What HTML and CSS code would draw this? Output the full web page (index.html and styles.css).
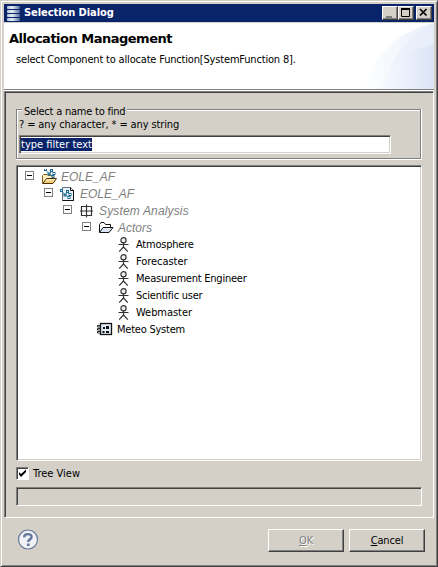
FILE: index.html
```html
<!DOCTYPE html>
<html lang="en">
<head>
<meta charset="utf-8">
<title>Selection Dialog</title>
<link rel="stylesheet" href="styles.css">
</head>
<body>
<svg class="defs" width="0" height="0">
  <defs>
    <symbol id="net" viewBox="0 0 12 10"><g fill="none" stroke="#17658f"><path d="M2 2l3 4 4-4M5 6l4 2" stroke="#5b9dbc"/><rect x=".5" y=".5" width="2" height="2"/><rect x="4" y="5" width="2" height="2"/><rect x="6.5" y="1.5" width="2" height="2"/><rect x="9" y="4.5" width="2" height="2"/><rect x="8" y="7.5" width="2" height="2"/></g></symbol>
    <symbol id="actor" viewBox="0 0 12 16"><g fill="none" stroke="#333" stroke-width="1.15"><circle cx="5.5" cy="3.2" r="2.6" fill="#eee"/><path d="M5.500 6v4.500M.5 7.500h10M5.500 10L1.200 14.700M5.500 10L9.800 14.700"/></g></symbol>
    <linearGradient id="gold" x2="0" y2="1"><stop stop-color="#fff3c8"/><stop offset="1" stop-color="#efb94e"/></linearGradient>
    <linearGradient id="metal"><stop stop-color="#b5c3da"/><stop offset=".4" stop-color="#e8edf5"/><stop offset="1" stop-color="#536d9e"/></linearGradient>
    <linearGradient id="fade1"><stop stop-color="#fff"/><stop offset="1" stop-color="#e8eefa"/></linearGradient>
    <linearGradient id="fade2"><stop stop-color="#f6f9ff"/><stop offset="1" stop-color="#dce4f6"/></linearGradient>
  </defs>
</svg>
<div class="window">
  <div class="titlebar">
    <svg class="appicon" width="15" height="15" viewBox="0 0 15 15"><g fill="url(#metal)"><rect x="1" y="0" width="13" height="3" rx="1"/><rect x="1" y="4" width="13" height="3" rx="1"/><rect x="1" y="8" width="13" height="3" rx="1"/><rect x="1" y="12" width="13" height="3" rx="1"/></g></svg>
    <span class="caption">Selection Dialog</span>
    <span class="winbtn"><svg width="11" height="10"><path d="M2 9h6" stroke="#808080" stroke-width="2"/></svg></span>
    <span class="winbtn"><svg width="11" height="10"><path d="M1 0h9v2H1z"/><path d="M1.500 .5h8v8h-8z" fill="none" stroke="#000"/></svg></span>
    <span class="winbtn close"><svg width="11" height="10"><path d="M2 1l6.500 6.500M8.500 1L2 7.500" stroke="#000" stroke-width="1.700"/></svg></span>
  </div>
  <div class="header">
    <svg class="swoosh" width="76" height="66" viewBox="0 0 76 66"><path d="M4 66C19 28 42 8 76 0v66z" fill="url(#fade1)"/><path d="M24 66C34 37 48 12 76 0v66z" fill="#e5ecf9" opacity=".45"/><path d="M24 66C32 39 50 25 76 22v44z" fill="url(#fade2)"/></svg>
    <div class="heading">Allocation Management</div>
    <div class="message">select Component to allocate Function[SystemFunction 8].</div>
  </div>
  <div class="panel">
    <fieldset class="group">
      <legend>Select a name to find</legend>
      <div class="hint">? = any character, * = any string</div>
      <div class="input"><span class="selected">type filter text</span></div>
    </fieldset>
    <div class="tree">
      <div class="row l0"><i class="twisty"></i><svg width="16" height="16"><path d="M1.500 14V6.500l1-1H6l1 1h5V9" fill="#fff0c0" stroke="#8b5c1c"/><path d="M1.500 14.500l4-5h10l-3.500 5z" fill="url(#gold)" stroke="#4a310c"/><use href="#net" x="3" y="-1" width="12" height="10"/></svg><em>EOLE_AF</em></div>
      <div class="row l1"><i class="twisty"></i><svg width="16" height="16"><path d="M2.500 1.500h8l3 3v10h-11z" fill="#edf5fc" stroke="#687580"/><path d="M10.500 1.500v3h3M13.500 4v10.500h-11" fill="none" stroke="#111"/><use href="#net" x="0" y="3" width="12" height="10"/></svg><em>EOLE_AF</em></div>
      <div class="row l2"><i class="twisty"></i><svg width="16" height="16"><path d="M2.500 3.500h10v9h-10zM7.500 1.500v13M1 8h13" fill="none" stroke="#333" stroke-width="1.200"/></svg><em class="wide">System Analysis</em></div>
      <div class="row l3"><i class="twisty"></i><svg width="16" height="16"><path d="M1.500 12V4.500l1.500-2h3l1.500 2h5V7" fill="#fff" stroke="#111"/><path d="M1.500 12.500L5 7.500h10l-4 5z" fill="#dce5f6" stroke="#111"/></svg><em>Actors</em></div>
      <div class="row l4"><svg width="12" height="16"><use href="#actor"/></svg><span>Atmosphere</span></div>
      <div class="row l4"><svg width="12" height="16"><use href="#actor"/></svg><span class="natural">Forecaster</span></div>
      <div class="row l4"><svg width="12" height="16"><use href="#actor"/></svg><span>Measurement Engineer</span></div>
      <div class="row l4"><svg width="12" height="16"><use href="#actor"/></svg><span>Scientific user</span></div>
      <div class="row l4"><svg width="12" height="16"><use href="#actor"/></svg><span class="natural">Webmaster</span></div>
      <div class="row l5"><svg width="16" height="16"><rect x="3.500" y="1.500" width="11" height="11" fill="#dfeaf6" stroke="#111" stroke-width="1.300"/><path d="M6 5h2v2H6zM9 4h3v3H9zM9 9h3v2H9zM5.500 9h2v2h-2zM7 5.500h3M10 7v3" fill="#111"/><path d="M.5 3.500h3v1.500h-3zM.5 6.500h3v1.500h-3zM.5 9.500h3v1.500h-3z" fill="#fff" stroke="#111" stroke-width=".9"/></svg><span>Meteo System</span></div>
    </div>
    <div class="check"><span class="box"><svg width="9" height="9"><path d="M1 3v2.500L3 8l5-5V.5L3 5z"/></svg></span><span>Tree View</span></div>
    <div class="status"></div>
  </div>
  <div class="footer">
    <svg class="help" width="22" height="22" viewBox="0 0 22 22"><circle cx="11" cy="10.500" r="9.500" fill="#f0f1f4" stroke="#687a9b" stroke-width="1.200"/><path d="M7.200 8.200C7.100 4.200 14.600 4 14.600 7.900C14.600 10.200 11.200 10.300 11.200 13" fill="none" stroke="#61769d" stroke-width="2.400"/><rect x="10" y="14.500" width="2.600" height="2.500" fill="#61769d"/></svg>
    <div class="button disabled"><u>O</u>K</div>
    <div class="button"><u>C</u>ancel</div>
  </div>
</div>
</body>
</html>
```
FILE: styles.css
```css
* { box-sizing: border-box; }
body { margin: 0; overflow: hidden; background: #d4d0c8; color: #000; font: 11px/14px "DejaVu Sans Condensed", "DejaVu Sans", sans-serif; white-space: nowrap; }
svg { display: block; flex: none; }
.defs { position: absolute; }
.window { width: 438px; height: 567px; padding: 3px 3px 2px; border: 1px solid; border-color: #d4d0c8 #404040 #404040 #d4d0c8; box-shadow: inset 1px 1px #fff, inset -1px -1px #808080; display: flex; flex-direction: column; }
.titlebar { height: 18px; flex: none; background: #0a246a; color: #fff; display: flex; align-items: center; padding: 0 2px; }
.caption { flex: 1; padding-left: 3px; font-weight: bold; line-height: 18px; letter-spacing: -.06px; }
.winbtn { width: 16px; height: 14px; background: #d4d0c8; border: 1px solid; border-color: #fff #404040 #404040 #fff; box-shadow: inset -1px -1px #808080; padding: 1px; }
.close { margin-left: 2px; }
.header { position: relative; height: 68px; flex: none; background: #fff; border-top: 1px solid #d4d0c8; border-bottom: 1px solid #808080; }
.swoosh { position: absolute; right: 0; top: 0; }
.heading { position: relative; padding: 7px 0 0 5px; font: bold 13px/17px "DejaVu Sans", sans-serif; letter-spacing: -.5px; }
.message { position: relative; padding: 6px 0 0 12px; letter-spacing: -.18px; }
.panel { height: 427px; margin-top: 1px; flex: none; border: 1px solid; border-color: #808080 #fff #fff #808080; box-shadow: 0 -1px #fff, inset 1px 1px #404040; padding: 11px 11px 0; }
.group { margin: 0; height: 57px; min-width: 0; padding: 0 0 0 2px; border: 0; background: linear-gradient(#fff,#fff) 1px 7px/403px 1px no-repeat, linear-gradient(#808080,#808080) 0 6px/405px 1px no-repeat, linear-gradient(#fff,#fff) 0 56px/406px 1px no-repeat, linear-gradient(#808080,#808080) 0 55px/405px 1px no-repeat, linear-gradient(#808080,#808080) 0 6px/1px 50px no-repeat, linear-gradient(#fff,#fff) 1px 7px/1px 48px no-repeat, linear-gradient(#808080,#808080) 404px 6px/1px 50px no-repeat, linear-gradient(#fff,#fff) 405px 6px/1px 51px no-repeat; }
legend { float: left; margin-left: 4px; padding: 0 2px; height: 14px; line-height: 17px; background: #d4d0c8; letter-spacing: -.22px; }
.hint { clear: both; height: 14px; line-height: 15px; padding-left: 1px; letter-spacing: -.12px; }
.input { width: 372px; height: 19px; margin: 4px 0 0 1px; padding: 2px 1px; background: #fff; border: 1px solid; border-color: #808080 #fff #fff #808080; box-shadow: inset 1px 1px #404040, inset -1px -1px #d4d0c8; }
.selected { display: block; width: 71px; height: 13px; line-height: 14px; background: #0a246a; color: #fff; }
.tree { height: 296px; margin-top: 5px; background: #fff; border: 1px solid; border-color: #808080 #fff #fff #808080; box-shadow: inset 1px 1px #404040, inset -1px -1px #d4d0c8; padding: 2px 1px; }
.row { height: 17px; display: flex; align-items: center; }
.row em { font: italic 12px/16px "Liberation Sans", sans-serif; color: #808080; margin-left: 4px; }
.row .wide { letter-spacing: .15px; }
.row span { margin-left: 6px; letter-spacing: -.23px; }
.row .natural { letter-spacing: -.05px; }
.twisty { width: 9px; height: 9px; margin: -2px 7px 0 0; border: 1px solid #808080; background: linear-gradient(#000,#000) center/5px 1px no-repeat; }
.l0 { padding-left: 7px; }
.l1 { padding-left: 26px; }
.l2 { padding-left: 45px; }
.l3 { padding-left: 64px; }
.l4 { padding-left: 100px; }
.l5 { padding-left: 79px; }
.row.l5 span { margin-left: 4px; }
.check { display: flex; align-items: center; height: 13px; margin-top: 6px; }
.box { width: 13px; height: 13px; padding: 1px; margin-right: 4px; background: #fff; border: 1px solid; border-color: #808080 #fff #fff #808080; box-shadow: inset 1px 1px #404040; }
.status { height: 19px; margin-top: 7px; border: 1px solid; border-color: #808080 #fff #fff #808080; box-shadow: inset 1px 1px #404040; }
.footer { display: flex; padding: 11px 9px 0 13px; }
.help { margin-right: auto; }
.button { width: 76px; height: 23px; margin-left: 5px; text-align: center; line-height: 21px; letter-spacing: -.15px; border: 1px solid; border-color: #fff #404040 #404040 #fff; box-shadow: inset -1px -1px #808080; }
.disabled { color: #808080; text-shadow: 1px 1px #fff; }
```
